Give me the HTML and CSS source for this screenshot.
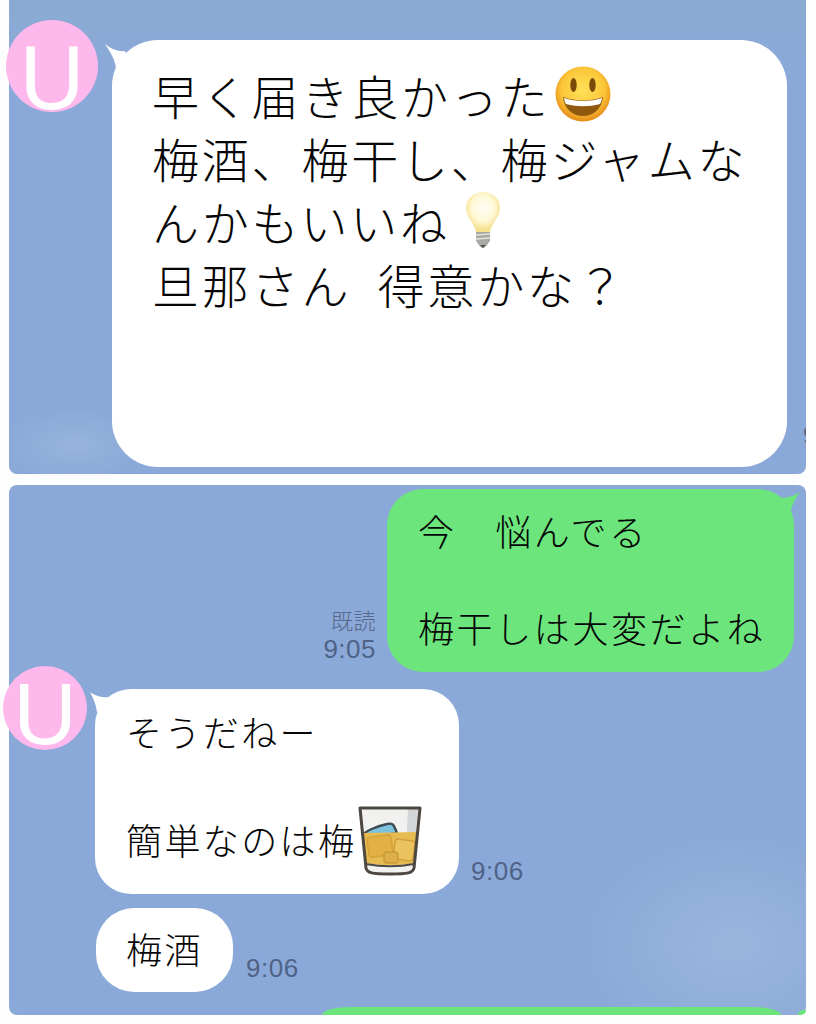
FILE: index.html
```html
<!DOCTYPE html>
<html lang="ja">
<head>
    <meta charset="UTF-8">
    <meta name="viewport" content="width=device-width, initial-scale=1.0">
    <title>トーク</title>
    <link rel="stylesheet" href="styles.css">
</head>
<body>
    <section class="panel panel-top">
        <div class="row">
            <div class="avatar avatar-big">U</div>
            <div class="bubble bubble-big">
                <svg class="tail tail-big" viewBox="0 0 30 30"><path d="M1 0 C6 4 13 8 21 7 L30 30 L12 24 C11 15 6 8 1 0 Z"/></svg>
                早く届き良かった<svg class="emoji emoji-smile" viewBox="0 0 56 56">
                    <defs>
                        <radialGradient id="smileFace" cx="50%" cy="42%" r="56%">
                            <stop offset="0%" stop-color="#ffe15a"/>
                            <stop offset="70%" stop-color="#fbc638"/>
                            <stop offset="100%" stop-color="#e8901c"/>
                        </radialGradient>
                    </defs>
                    <circle cx="28" cy="28" r="27.5" fill="url(#smileFace)"/>
                    <ellipse cx="18.500" cy="19" rx="3.200" ry="7" fill="#7a4a08"/>
                    <ellipse cx="37.500" cy="19" rx="3.200" ry="7" fill="#7a4a08"/>
                    <path d="M8 31 C20 35.500 36 35.500 48 31 C47 43 38 50 28 50 C18 50 9 43 8 31 Z" fill="#8f5a10"/>
                    <path d="M9 32 C20 36 36 36 47 32 C46.500 35 46 36.500 45 38 C34 41 22 41 11 38 C10 36.500 9.500 35 9 32 Z" fill="#fff"/>
                </svg><br>
                梅酒、梅干し、梅ジャムな<br>
                んかもいいね<svg class="emoji emoji-bulb" viewBox="0 0 36 58">
                    <defs>
                        <radialGradient id="bulbGlass" cx="50%" cy="40%" r="55%">
                            <stop offset="0%" stop-color="#fffef5"/>
                            <stop offset="60%" stop-color="#fff8d6"/>
                            <stop offset="100%" stop-color="#f5e08e"/>
                        </radialGradient>
                    </defs>
                    <path d="M18 1 C8 1 1 8 1 17 C1 26 9 31 11 41 L25 41 C27 31 35 26 35 17 C35 8 28 1 18 1 Z" fill="url(#bulbGlass)"/>
                    <path d="M11 41 L25 41 L25 50 C23 52 22 56 18 57 C14 56 13 52 11 50 Z" fill="#a9a9a3"/>
                    <path d="M11 44 L25 43 M11 48 L25 47" stroke="#e2e2dc" stroke-width="1.600"/>
                    <path d="M15 54 L21 54 L18 57 Z" fill="#55554f"/>
                </svg><br>
                旦那さん&nbsp;&nbsp;得意かな？
            </div>
        </div>
        <span class="cut-time">9</span>
    </section>

    <section class="panel panel-bottom">
        <div class="row row-mine">
            <div class="meta">
                <span class="read">既読</span>
                <span class="time">9:05</span>
            </div>
            <div class="bubble bubble-mine">
                <svg class="tail tail-mine" viewBox="0 0 30 24"><path d="M30 0 C24 4 16 7 8 5 L4 24 L21 18 C23 11 26 5 30 0 Z"/></svg>
                今　悩んでる<br>
                <br>
                梅干しは大変だよね
            </div>
        </div>

        <div class="row row-friend">
            <div class="avatar avatar-small">U</div>
            <div class="bubble bubble-friend">
                <svg class="tail tail-friend" viewBox="0 0 26 26"><path d="M1 0 C5 3 12 6 19 5 L26 26 L8 20 C7 12 4 6 1 0 Z"/></svg>
                そうだねー<br>
                <br>
                簡単なのは梅<svg class="emoji emoji-glass" viewBox="0 0 64 70">
                    <path d="M2 2 L62 2 L56 62 C55 67 50 68 32 68 C14 68 9 67 8 62 Z" fill="#f1f1f0"/>
                    <path d="M50 3 L60 3 L55 58 L47 58 Z" fill="#d3d5d8"/>
                    <path d="M5 29 C7 25 20 20 29 18 C33 17 35 18 36 20 L39 27 L8 33 Z" fill="#7cc3e0" stroke="#3f4a50" stroke-width="2.400" stroke-linejoin="round"/>
                    <path d="M5 27 L60 26 L56 57 C40 60 24 60 8 57 Z" fill="#e6bb50"/>
                    <rect x="10" y="30" width="24" height="20" rx="3" transform="rotate(-8 22 40)" fill="#e2b044" stroke="#d3a33c" stroke-width="1.500"/>
                    <rect x="36" y="34" width="20" height="20" rx="3" transform="rotate(8 46 44)" fill="#ebc35e" stroke="#cfa03e" stroke-width="1.500"/>
                    <rect x="26" y="46" width="14" height="11" rx="3" fill="#dcae48" stroke="#c9993a" stroke-width="1.500"/>
                    <path d="M8 58 C24 61 40 61 56 58" fill="none" stroke="#4c4a45" stroke-width="2"/>
                    <path d="M2 2 L62 2 L56 62 C55 67 50 68 32 68 C14 68 9 67 8 62 Z" fill="none" stroke="#4c4740" stroke-width="3" stroke-linejoin="round"/>
                </svg>
            </div>
            <span class="time time-friend">9:06</span>
        </div>

        <div class="row row-short">
            <div class="bubble bubble-short">梅酒</div>
            <span class="time time-short">9:06</span>
        </div>

        <div class="row row-peek">
            <div class="peek"></div>
            <div class="peek-tail"></div>
        </div>
    </section>
</body>
</html>
```

FILE: styles.css
```css
* {
    margin: 0;
    padding: 0;
    box-sizing: border-box;
}

body {
    font-family: 'Noto Sans CJK JP', 'Liberation Sans', sans-serif;
    font-weight: 300;
    background: #fdfdfd;
    color: #050505;
    padding-left: 9px;
    width: 816px;
    height: 1024px;
    overflow: hidden;
}

.panel {
    position: relative;
    width: 797px;
    background-color: #8ba9d8;
    border-radius: 8px;
}

.panel-top {
    height: 474px;
    border-radius: 0 0 8px 8px;
    padding-top: 20px;
    background-image:
        radial-gradient(ellipse 70px 36px at 65px 445px, rgba(170, 195, 230, 0.4), transparent),
        linear-gradient(180deg, #8aaad2 0, #8ba9d8 60px);
}

.panel-bottom {
    height: 530px;
    margin-top: 11px;
    padding-top: 4px;
    background-image:
        radial-gradient(ellipse 150px 110px at 725px 460px, rgba(165, 190, 226, 0.6), transparent);
}

.row {
    display: flex;
}

.avatar {
    flex: none;
    display: flex;
    align-items: center;
    justify-content: center;
    border-radius: 50%;
    background: #fdb9ec;
    color: #fff;
    font-family: 'Liberation Sans', sans-serif;
    font-weight: 400;
    line-height: 1;
}

.avatar-big {
    width: 92px;
    height: 92px;
    margin-left: -3px;
    padding-top: 23px;
    font-size: 90px;
}

.avatar-small {
    width: 84px;
    height: 84px;
    margin-left: -6px;
    padding-top: 11px;
    font-size: 88px;
}

.bubble {
    position: relative;
    flex: none;
    background: #fff;
}

.tail {
    position: absolute;
    fill: #fff;
}

.bubble-big {
    width: 675px;
    height: 427px;
    margin-top: 20px;
    margin-left: 14px;
    padding: 23px 0 0 40px;
    border-radius: 46px;
    font-size: 47px;
    line-height: 63px;
    letter-spacing: 2.8px;
}

.tail-big {
    width: 30px;
    height: 30px;
    left: -8px;
    top: 4px;
}

.bubble-mine {
    width: 407px;
    height: 183px;
    padding: 17px 0 0 31px;
    margin-left: 11px;
    background: #6ce57c;
    border-radius: 36px;
    font-size: 36px;
    line-height: 48.5px;
    letter-spacing: 2.6px;
}

.tail-mine {
    width: 30px;
    height: 24px;
    right: -6px;
    top: 3px;
    fill: #6ce57c;
}

.row-mine {
    justify-content: flex-end;
    padding-right: 12px;
}

.meta {
    display: flex;
    flex-direction: column;
    align-items: flex-end;
    justify-content: flex-end;
    padding-bottom: 8px;
}

.read {
    font-size: 22px;
    line-height: 30px;
    letter-spacing: 0.5px;
    color: #56698c;
}

.time {
    font-family: 'Liberation Sans', sans-serif;
    font-weight: 400;
    font-size: 26px;
    line-height: 30px;
    letter-spacing: 0.5px;
    color: #4f6287;
}

.row-friend {
    margin-top: -6px;
}

.bubble-friend {
    width: 364px;
    height: 205px;
    margin-top: 23px;
    margin-left: 8px;
    padding: 15px 0 0 31px;
    border-radius: 36px;
    font-size: 36px;
    line-height: 54px;
    letter-spacing: 2.4px;
}

.tail-friend {
    width: 26px;
    height: 26px;
    left: -6px;
    top: 3px;
}

.time-friend {
    align-self: flex-end;
    margin-left: 12px;
    padding-bottom: 8px;
}

.row-short {
    margin-top: 14px;
    padding-left: 87px;
}

.bubble-short {
    width: 137px;
    height: 84px;
    padding-left: 30px;
    border-radius: 38px;
    font-size: 36px;
    line-height: 80px;
    letter-spacing: 2.4px;
}

.time-short {
    align-self: flex-end;
    margin-left: 13px;
    padding-bottom: 9px;
}

.row-peek {
    margin-top: 15px;
    padding-left: 313px;
    height: 8px;
    align-items: flex-start;
}

.peek {
    width: 459px;
    height: 8px;
    background: #6ce57c;
    border-radius: 30px 30px 0 0 / 8px 8px 0 0;
}

.peek-tail {
    width: 8px;
    height: 5px;
    margin-left: 17px;
    margin-top: 3px;
    background: #6ce57c;
    border-radius: 8px 0 8px 0;
}

.emoji {
    display: inline-block;
    vertical-align: middle;
}

.emoji-smile {
    width: 56px;
    height: 56px;
    margin: -15px 0 1px 5px;
}

.emoji-bulb {
    width: 36px;
    height: 58px;
    margin: -17px 0 -1px 15px;
}

.emoji-glass {
    width: 64px;
    height: 70px;
    margin: -14px 0 -6px 2px;
}

/* time of the next message, cut off by the right edge */
.cut-time {
    position: absolute;
    right: 0;
    top: 420px;
    width: 3px;
    height: 30px;
    overflow: hidden;
    font-family: 'Liberation Sans', sans-serif;
    font-weight: 400;
    font-size: 26px;
    line-height: 30px;
    color: #4f6287;
}
```
